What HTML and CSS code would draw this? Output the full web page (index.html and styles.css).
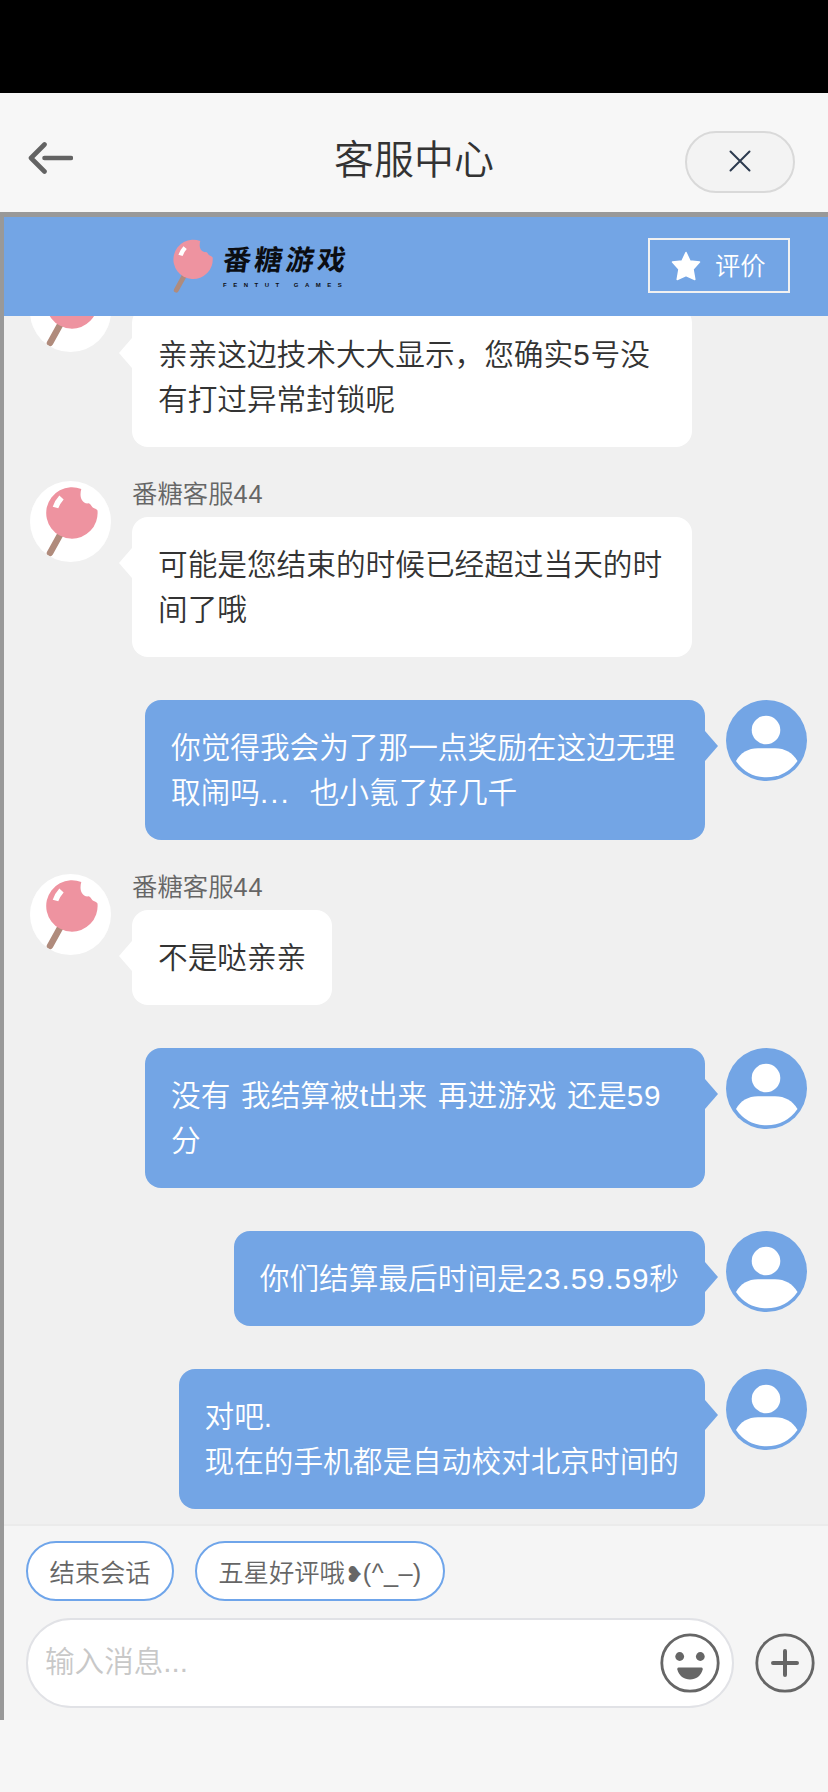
FILE: index.html
```html
<!DOCTYPE html>
<html lang="zh-CN">
<head>
<meta charset="utf-8">
<title>客服中心</title>
<link rel="stylesheet" href="styles.css">
</head>
<body>
<svg class="defs" width="0" height="0" aria-hidden="true">
  <symbol id="candy" viewBox="0 0 81 81">
    <path d="M30.500 53 20 72" stroke="#b08b7c" stroke-width="6.500" stroke-linecap="round"/>
    <path d="M51.300 8C49.500 14 50.500 21.500 57.500 22.500C60 21.500 61 24.500 62.500 26.200C64 27.300 66 27.500 67.500 29.500A25.700 25.700 0 1 1 51.300 8Z" fill="#ee93a0"/>
    <path d="M25.500 26.500Q27 21.500 31.500 16.500" fill="none" stroke="#fff" stroke-width="5.800"/>
  </symbol>
  <symbol id="user" viewBox="0 0 81 81">
    <circle cx="40.500" cy="40.500" r="40.500" fill="#73a5e5"/>
    <circle cx="40" cy="30" r="14.300" fill="#fff"/>
    <path d="M10 61Q17 48.500 32 48.300H49Q64 48.500 71.500 61Q60 77.300 40.500 77.300T10 61Z" fill="#fff"/>
  </symbol>
</svg>
<div class="screen">
  <div class="statusbar"></div>
  <header class="nav">
    <svg class="back" width="46" height="32" viewBox="0 0 46 32" fill="none" stroke="#636363" stroke-width="4.600" stroke-linecap="round" stroke-linejoin="round"><path d="M17.500 2.500 4 16 17.500 29.500M17.500 16H44"/></svg>
    <h1 class="title">客服中心</h1>
    <button class="close" aria-label="关闭"><svg width="22" height="22" viewBox="0 0 22 22" stroke="#2c3a4e" stroke-width="2" stroke-linecap="round"><path d="M1.500 1.500 20.500 20.500M20.500 1.500 1.500 20.500"/></svg></button>
  </header>
  <main class="frame">
    <div class="brandbar">
      <div class="logo">
        <svg class="logo-candy" width="62" height="62" viewBox="0 0 81 81"><use href="#candy"/></svg>
        <div class="logo-words"><span class="logo-name">番糖游戏</span><span class="logo-sub">FENTUT GAMES</span></div>
      </div>
      <button class="rate"><svg width="30" height="30" viewBox="0 0 30 30" fill="#fff" stroke="#fff" stroke-width="1.500" stroke-linejoin="round"><path d="M15 1.500 19 10 28.500 11.100 22 18.200 23.800 28.500 15 24.500 6.200 28.500 8 18.200 1.500 11.100 11 10Z"/></svg><span>评价</span></button>
    </div>
    <section class="chat">
      <div class="row agent">
        <div class="avatar"><svg width="81" height="81"><use href="#candy"/></svg></div>
        <div class="body"><div class="name"></div><div class="bubble full">亲亲这边技术大大显示，您确实<span class="num">5</span>号没<br>有打过异常封锁呢</div></div>
      </div>
      <div class="row agent">
        <div class="avatar"><svg width="81" height="81"><use href="#candy"/></svg></div>
        <div class="body"><div class="name">番糖客服<span class="num">44</span></div><div class="bubble full">可能是您结束的时候已经超过当天的时<br>间了哦</div></div>
      </div>
      <div class="row me">
        <div class="bubble full">你觉得我会为了那一点奖励在这边无理<br>取闹吗<span class="dots">...</span>也小氪了好几千</div>
        <svg width="81" height="81"><use href="#user"/></svg>
      </div>
      <div class="row agent">
        <div class="avatar"><svg width="81" height="81"><use href="#candy"/></svg></div>
        <div class="body"><div class="name">番糖客服<span class="num">44</span></div><div class="bubble">不是哒亲亲</div></div>
      </div>
      <div class="row me">
        <div class="bubble full spaced">没有 我结算被t出来 再进游戏 还是<span class="num">59</span><br>分</div>
        <svg width="81" height="81"><use href="#user"/></svg>
      </div>
      <div class="row me">
        <div class="bubble">你们结算最后时间是<span class="num">23.59.59</span>秒</div>
        <svg width="81" height="81"><use href="#user"/></svg>
      </div>
      <div class="row me">
        <div class="bubble">对吧.<br>现在的手机都是自动校对北京时间的</div>
        <svg width="81" height="81"><use href="#user"/></svg>
      </div>
    </section>
    <footer class="composer">
      <div class="chips">
        <button class="chip">结束会话</button>
        <button class="chip chip-wide">五星好评哦<span class="heart">❥</span><span class="face">(^_–)</span></button>
      </div>
      <div class="entry">
        <div class="field"><span class="placeholder">输入消息...</span>
          <svg width="60" height="60" viewBox="0 0 60 60"><circle cx="30" cy="30" r="28.200" fill="none" stroke="#666" stroke-width="2.800"/><circle cx="19.700" cy="23.500" r="4.400" fill="#666"/><circle cx="40.300" cy="23.500" r="4.400" fill="#666"/><path d="M18.500 34.600H41.500Q43 34.600 42.700 36.500C41 43 36 46.500 30 46.500S19 43 17.300 36.500Q17 34.600 18.500 34.600Z" fill="#666"/></svg>
        </div>
        <svg class="plus" width="60" height="60" viewBox="0 0 60 60" fill="none" stroke="#666"><circle cx="30" cy="30" r="28.200" stroke-width="2.800"/><path d="M30 18V42M18 30H42" stroke-width="4" stroke-linecap="round"/></svg>
      </div>
    </footer>
  </main>
</div>
</body>
</html>
```
FILE: styles.css
```css
* { box-sizing: border-box; }
body { margin: 0; background: #f6f6f6; color: #333; font-family: "Liberation Sans", "Noto Sans CJK SC", sans-serif; font-weight: 350; }
button { margin: 0; padding: 0; font: inherit; color: inherit; }
svg { display: block; flex: none; }
.defs { position: absolute; }
.screen { width: 828px; height: 1792px; display: flex; flex-direction: column; overflow: hidden; background: #f6f6f6; }
.statusbar { height: 93px; background: #000; flex: none; }
.nav { height: 119px; flex: none; display: grid; grid-template-columns: 200px 1fr 200px; padding: 0 33px 0 27px; background: #f7f7f7; }
.back { margin-top: 49px; }
.title { margin: 37px 0 0 6px; font-size: 40px; line-height: 60px; font-weight: 350; text-align: center; color: #333; }
.close { width: 110px; height: 62px; margin-top: 38px; justify-self: end; display: flex; align-items: center; justify-content: center; border: 2px solid #d9d9d9; border-radius: 31px; background: #f3f3f3; }
.close svg { margin-top: -3px; }
.frame { height: 1508px; flex: none; display: flex; flex-direction: column; border: solid #999; border-width: 5px 0 0 4px; }
.brandbar { height: 99px; flex: none; display: flex; justify-content: space-between; align-items: flex-start; padding: 21px 38px 0 157px; background: #73a5e5; }
.logo { display: flex; }
.logo-candy { margin-top: -3px; }
.logo-words { display: flex; flex-direction: column; color: #0b0d12; }
.logo-name { margin-top: 2px; height: 41px; font-size: 28px; line-height: 42px; font-weight: 700; letter-spacing: 3.500px; transform: skewX(-8deg); white-space: nowrap; }
.logo-sub { font-size: 6px; line-height: 8px; font-weight: 700; letter-spacing: 6.500px; white-space: nowrap; }
.rate { width: 142px; height: 55px; display: flex; align-items: center; gap: 14px; padding-left: 21px; border: 2px solid #f1f1f1; background: none; color: #fff; font-size: 25.300px; }
.rate span { padding-bottom: 4px; }
.chat { flex: 1; min-height: 0; display: flex; flex-direction: column; justify-content: flex-end; overflow: hidden; padding: 0 21px 15px 26px; background: #f0f0f0; }
.row { display: flex; flex: none; align-items: flex-start; }
.agent { margin-top: 34px; gap: 21px; }
.me { margin-top: 43px; gap: 21px; justify-content: flex-end; }
.avatar { width: 81px; height: 81px; border-radius: 50%; background: #fff; overflow: hidden; flex: none; }
.body { display: flex; flex-direction: column; align-items: flex-start; }
.name { height: 36px; font-size: 25.400px; line-height: 26px; color: #666; }
.bubble { position: relative; padding: 24.500px 26px 25.500px; border-radius: 16px; font-size: 29.660px; line-height: 45px; background: #fff; white-space: nowrap; }
.full { width: 560px; }
.bubble::before { content: ""; position: absolute; top: 31px; left: -13px; border: solid transparent; border-width: 15px 13px 15px 0; border-right-color: #fff; }
.me .bubble { background: #73a5e5; color: #fff; }
.me .bubble::before { left: auto; right: -13px; border-width: 15px 0 15px 13px; border-color: transparent transparent transparent #73a5e5; }
.spaced { word-spacing: 2.500px; }
.num { letter-spacing: 0.900px; }
.dots { letter-spacing: 2px; margin-right: 19px; }
.composer { height: 196px; flex: none; border-top: 2px solid #ebebeb; padding: 15px 13px 0 22px; background: #f5f5f5; }
.chips { display: flex; gap: 21px; }
.chip { height: 60px; width: 148px; border: 2px solid #6fa5ea; border-radius: 30px; background: #fff; color: #666; font-size: 25.300px; line-height: 56px; padding-top: 2px; white-space: nowrap; }
.chip-wide { width: 250px; }
.heart { font-family: "DejaVu Sans", sans-serif; font-size: 22px; }
.face { letter-spacing: 0.400px; }
.entry { display: flex; align-items: center; justify-content: space-between; margin-top: 17px; }
.field { width: 708px; height: 90px; display: flex; align-items: center; justify-content: space-between; padding: 0 12px 0 17px; border: 2px solid #e1e2e6; border-radius: 45px; background: #fff; }
.placeholder { font-size: 29.600px; color: #c8c8c8; padding-bottom: 7px; }
```
